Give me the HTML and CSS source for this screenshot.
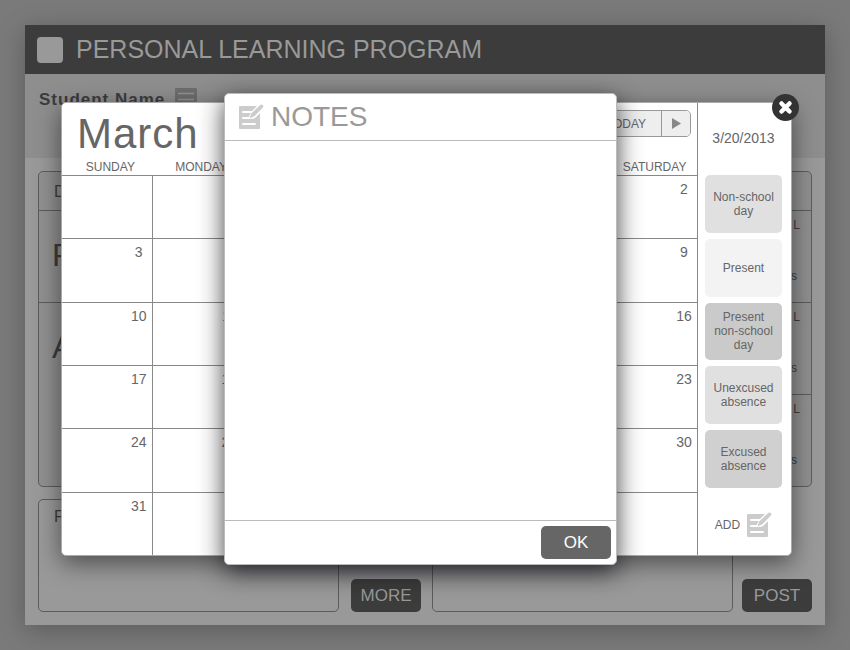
FILE: index.html
```html
<!DOCTYPE html>
<html lang="en">
<head>
<meta charset="utf-8">
<meta name="viewport" content="width=device-width, initial-scale=1">
<title>Personal Learning Program</title>
<link rel="stylesheet" href="styles.css">
</head>
<body>
<svg class="sprite" aria-hidden="true">
  <symbol id="note" viewBox="0 0 26 26">
    <path fill="currentColor" d="M2 2h17l-5 5H6v2h7l-2 3v1H6v2h6l5-1 5-5v15a1 1 0 0 1-1 1H2a1 1 0 0 1-1-1V3a1 1 0 0 1 1-1Z"/>
    <path stroke="#fff" stroke-width="2" stroke-linecap="round" d="M5 8h8M5 14h7M5 20h12"/>
    <path fill="none" stroke="#fff" stroke-width="6" stroke-linecap="round" d="M15 11.500 23 3.500"/>
    <path fill="currentColor" d="m21.500 1.800 1.300-1c1.500-.8 3.200.8 2.300 2.400l-8.700 9-4.100 1.700c-.5.200-.8-.100-.6-.6l1.500-3.900Z"/>
  </symbol>
</svg>

<div class="app">
  <header class="app-header">
    <span class="logo"></span>
    <h1>PERSONAL LEARNING PROGRAM</h1>
  </header>
  <div class="student">
    <h2>Student Name</h2>
    <svg class="list-icon" viewBox="0 0 22 22" aria-hidden="true">
      <rect width="22" height="22" rx="1" fill="#6e6e6e"/>
      <path stroke="#939393" stroke-width="1.500" d="M3 5.500h16M3 11.500h16M3 17.500h16"/>
    </svg>
  </div>
  <main class="content">
    <section class="record">
      <div class="record-head">D</div>
      <div class="record-body">
        <div class="subjects">
          <div class="subject">P</div>
          <div class="subject subject-tall">A</div>
        </div>
        <div class="totals">
          <div class="total"><span>L</span><span class="unit">s</span></div>
          <div class="total"><span>L</span><span class="unit">s</span></div>
          <div class="total"><span>L</span><span class="unit">s</span></div>
        </div>
      </div>
    </section>
    <div class="feed">
      <section class="feed-box">F</section>
      <button type="button" class="btn btn-dim btn-more">MORE</button>
      <section class="feed-box"></section>
      <button type="button" class="btn btn-dim btn-post">POST</button>
    </div>
  </main>
</div>

<section class="calendar">
  <div class="month">
    <div class="month-head">
      <h2>March</h2>
      <div class="pager">
        <button type="button" class="today">TODAY</button>
        <button type="button" class="next" aria-label="Next"><svg viewBox="0 0 9 11"><path fill="#888" d="M0 0 9 5.500 0 11Z"/></svg></button>
      </div>
    </div>
    <table class="days">
      <thead>
        <tr><th>SUNDAY</th><th>MONDAY</th><th></th><th></th><th></th><th></th><th>SATURDAY</th></tr>
      </thead>
      <tbody>
        <tr><td></td><td></td><td></td><td></td><td></td><td></td><td><span>2</span></td></tr>
        <tr><td><span>3</span></td><td></td><td></td><td></td><td></td><td></td><td><span>9</span></td></tr>
        <tr><td><span>10</span></td><td><span>11</span></td><td></td><td></td><td></td><td></td><td><span>16</span></td></tr>
        <tr><td><span>17</span></td><td><span>18</span></td><td></td><td></td><td></td><td></td><td><span>23</span></td></tr>
        <tr><td><span>24</span></td><td><span>25</span></td><td></td><td></td><td></td><td></td><td><span>30</span></td></tr>
        <tr><td><span>31</span></td><td></td><td></td><td></td><td></td><td></td><td></td></tr>
      </tbody>
    </table>
  </div>
  <aside class="legend">
    <p class="date">3/20/2013</p>
    <div class="tiles">
      <button type="button" class="tile tile-mid">Non-school day</button>
      <button type="button" class="tile tile-light">Present</button>
      <button type="button" class="tile tile-dark">Present non-school day</button>
      <button type="button" class="tile tile-mid">Unexcused absence</button>
      <button type="button" class="tile tile-dim">Excused absence</button>
    </div>
    <button type="button" class="add">ADD <svg class="note-icon" aria-hidden="true"><use href="#note"/></svg></button>
  </aside>
  <button type="button" class="close" aria-label="Close"><svg viewBox="0 0 27 27"><circle cx="13.500" cy="13.500" r="13.500" fill="#333"/><path stroke="#fff" stroke-width="4.500" stroke-linecap="round" d="m9.500 9.500 8 8M17.500 9.500l-8 8"/></svg></button>
</section>

<section class="notes">
  <header class="notes-head">
    <svg class="note-icon" aria-hidden="true"><use href="#note"/></svg>
    <label for="notes-text">NOTES</label>
  </header>
  <textarea id="notes-text"></textarea>
  <footer class="notes-foot">
    <button type="button" class="btn btn-ok">OK</button>
  </footer>
</section>
</body>
</html>
```
FILE: styles.css
```css
* {
  box-sizing: border-box;
}

body {
  position: relative;
  display: flex;
  min-height: 100vh;
  margin: 0;
  padding: 25px;
  background: #7a7a7a;
  color: #666;
  font-family: "Liberation Sans", Arial, sans-serif;
}

h1, h2, p {
  margin: 0;
  font-weight: normal;
}

button {
  padding: 0;
  border: 0;
  color: inherit;
  font: inherit;
}

svg {
  display: block;
}

.sprite {
  position: absolute;
  width: 0;
  height: 0;
}

.note-icon {
  width: 26px;
  height: 26px;
  color: #ccc;
}

.btn {
  width: 70px;
  height: 33px;
  border-radius: 5px;
  font-size: 17px;
}

/* Application window */

.app {
  display: flex;
  flex: 1;
  flex-direction: column;
  background: #999;
  box-shadow: 0 5px 24px rgba(0, 0, 0, 0.25);
  color: #3c3c3c;
}

.app-header {
  display: flex;
  align-items: center;
  gap: 13px;
  height: 49px;
  padding: 0 12px;
  background: #3c3c3c;
  color: #999;
}

.app-header h1 {
  font-size: 25px;
}

.logo {
  width: 26px;
  height: 26px;
  border-radius: 4px;
  background: #999;
}

.student {
  display: flex;
  gap: 10px;
  height: 84px;
  padding: 14px;
  background: #8e8e8e;
}

.student h2 {
  font-size: 17px;
  font-weight: bold;
  line-height: 24px;
  letter-spacing: 1px;
}

.list-icon {
  width: 22px;
  height: 22px;
}

.content {
  display: flex;
  flex: 1;
  flex-direction: column;
  gap: 12px;
  padding: 13px;
}

.record {
  display: flex;
  flex: 1;
  flex-direction: column;
  border: 1px solid #5c5c5c;
  border-radius: 5px;
  background: #909090;
}

.record-head {
  height: 38px;
  padding: 0 15px;
  font-size: 16px;
  line-height: 40px;
}

.record-body {
  display: grid;
  flex: 1;
  grid-template-columns: 1fr 1fr;
}

.subjects, .totals {
  display: grid;
  grid-template-rows: 1fr 1fr 1fr;
}

.subject, .total {
  border-top: 1px solid #5c5c5c;
}

.subject {
  padding: 26px 13px;
  font-size: 32px;
  line-height: 36px;
}

.subject-tall {
  grid-row: span 2;
}

.total {
  display: flex;
  flex-direction: column;
  align-items: flex-end;
  justify-content: space-between;
  padding: 6px 11px 18px;
  font-size: 12px;
  line-height: 16px;
}

.unit {
  padding-right: 3px;
}

.feed {
  display: flex;
  align-items: flex-end;
  height: 113px;
}

.feed-box {
  flex: 1;
  height: 100%;
  padding: 8px 15px;
  border: 1px solid #5c5c5c;
  border-radius: 5px;
  font-size: 16px;
}

.btn-dim {
  background: #3c3c3c;
  color: #999;
}

.btn-more {
  margin: 0 11px 0 12px;
}

.btn-post {
  margin-left: 9px;
}

/* Attendance calendar */

.calendar, .notes {
  position: absolute;
  border-radius: 5px;
  background: #fff;
}

.calendar {
  inset: 102px 58px 94px 61px;
  display: grid;
  grid-template-columns: 1fr 93px;
  border: 1px solid #aaa;
  box-shadow: 0 7px 24px rgba(0, 0, 0, 0.5);
}

.month {
  display: flex;
  flex-direction: column;
  border-right: 1px solid #888;
}

.month-head {
  display: flex;
  align-items: flex-start;
  justify-content: space-between;
  height: 52px;
  padding: 7px 6px 0 15px;
}

.month-head h2 {
  font-size: 42px;
  line-height: 48px;
  letter-spacing: 1px;
}

.pager {
  display: flex;
  overflow: hidden;
  border: 1px solid #999;
  border-radius: 5px;
}

.pager button {
  height: 25px;
  background: #eee;
}

.today {
  width: 70px;
  font-size: 12px;
}

.pager .next {
  display: grid;
  width: 29px;
  place-items: center;
  border-left: 1px solid #999;
}

.next svg {
  width: 9px;
  height: 11px;
}

.days {
  flex: 1;
  width: 100%;
  border-spacing: 0;
  table-layout: fixed;
}

.days th {
  height: 20px;
  padding: 4px 0 0 6px;
  font-size: 12px;
  font-weight: normal;
  line-height: 14px;
}

.days td {
  padding: 5px 5px 0 0;
  border-top: 1px solid #888;
  border-right: 1px solid #888;
  font-size: 14px;
  line-height: 16px;
  text-align: right;
  vertical-align: top;
}

.days td:last-child {
  border-right: 0;
}

.days span {
  display: inline-block;
  width: 16px;
  text-align: center;
}

.legend {
  display: flex;
  flex-direction: column;
  padding: 27px 9px 17px 7px;
  text-align: center;
}

.date {
  font-size: 14px;
  line-height: 16px;
  white-space: nowrap;
}

.tiles {
  display: flex;
  flex: 1;
  flex-direction: column;
  gap: 6px;
  margin: 29px 0 24px;
}

.tile {
  flex: 1;
  padding: 0 6px;
  border-radius: 5px;
  font-size: 12px;
  line-height: 14px;
}

.tile-light { background: #f3f3f3; }
.tile-mid { background: #e0e0e0; }
.tile-dim { background: #d0d0d0; }
.tile-dark { background: #cacaca; }

.add {
  display: flex;
  align-items: center;
  justify-content: center;
  gap: 6px;
  background: none;
  font-size: 12px;
}

.close {
  position: absolute;
  top: -9px;
  right: -8px;
  width: 27px;
  height: 27px;
  border-radius: 50%;
  background: none;
}

/* Notes dialog */

.notes {
  inset: 93px 233px 85px 224px;
  display: flex;
  flex-direction: column;
  border: 1px solid #bbb;
  box-shadow: 0 7px 24px rgba(20, 20, 28, 0.8);
}

.notes-head {
  display: flex;
  align-items: center;
  gap: 7px;
  height: 47px;
  padding: 0 13px;
  border-bottom: 1px solid #bbb;
  color: #999;
  font-size: 28px;
}

.notes textarea {
  flex: 1;
  width: 100%;
  padding: 12px;
  border: 0;
  outline: 0;
  background: none;
  font: inherit;
  resize: none;
}

.notes-foot {
  display: flex;
  justify-content: flex-end;
  padding: 5px;
  border-top: 1px solid #bbb;
}

.btn-ok {
  background: #666;
  color: #fff;
}
```
